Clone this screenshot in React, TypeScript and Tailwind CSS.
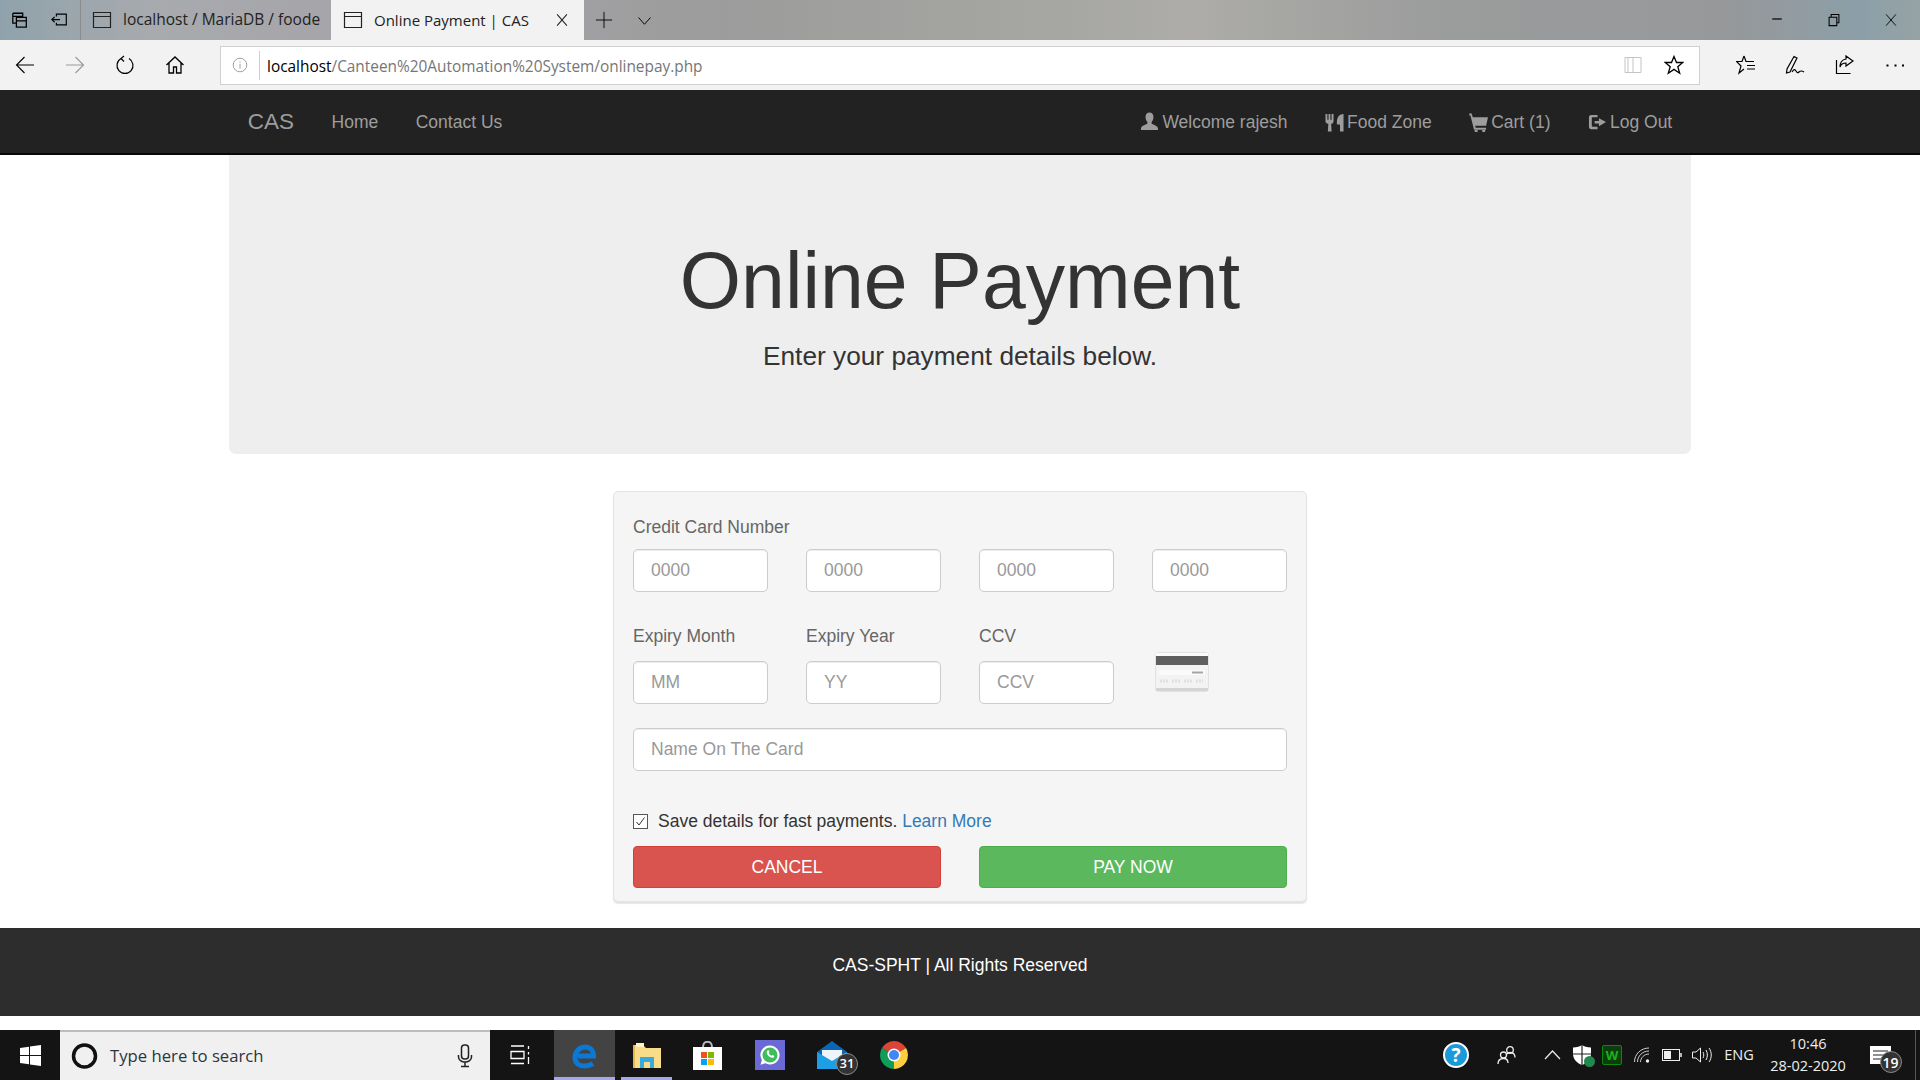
import type { ReactNode } from "react"

const thin = { fill: "none", stroke: "currentColor", strokeWidth: 1 }

function Svg({ size = 20, box = 20, className, children }: { size?: number; box?: number; className?: string; children: ReactNode }) {
  return (
    <svg width={size} height={size} viewBox={`0 0 ${box} ${box}`} className={className}>
      {children}
    </svg>
  )
}

function TabPageIcon() {
  return (
    <Svg size={20}>
      <path d="M1.500 2.500h17v15h-17zM1.500 6.500h17" {...thin} strokeWidth={1.2} />
    </Svg>
  )
}

function UserGlyph() {
  return (
    <Svg size={19} className="mr-[3px] -mt-[1px]">
      <path fill="currentColor" d="M10 .5c2.600 0 4.200 2 4.200 4.800 0 2.300-1 4.100-2 5.200v1.600c0 .8 6.800 2 6.800 5.400v1.500H1v-1.500c0-3.400 6.800-4.600 6.800-5.400v-1.600c-1-1.100-2-2.900-2-5.200C5.800 2.500 7.400.5 10 .5z" />
    </Svg>
  )
}

function FoodGlyph() {
  return (
    <Svg size={19} className="mr-[3px]">
      <path fill="currentColor" d="M.5 1h2v6h1.200V1h2v6h1.200V1h2.100v8c0 1.300-1 2.200-2.500 2.500l.5 8H3l.5-8C1.800 11.200.5 10.300.5 9zM12.500 10C12.500 5 14.500 1 19.500 1v18.500h-3.700V12h-3.300z" />
    </Svg>
  )
}

function CartGlyph() {
  return (
    <Svg size={19} className="mr-[3px]">
      <path fill="currentColor" d="M0 .5h2.800L4 4.500h16l-2 9H6.500l.5 2h11v2H5.300L1.500 2.500H.5zM6 18h3v2H6zM14 18h3v2h-3z" />
    </Svg>
  )
}

function LogOutGlyph() {
  return (
    <Svg size={19} className="mr-[3px]">
      <path fill="currentColor" d="M3.500 2H10v2.500H5c-.8 0-1 .4-1 1v8c0 .7.300 1 1 1h5V17H3.500C1.800 17 1 16 1 14.500v-10C1 3 1.800 2 3.500 2zM11.500 5.500l7.500 4-7.500 4.500v-3H7V8.500h4.500z" />
    </Svg>
  )
}

function NavLink({ icon, children }: { icon?: ReactNode; children: ReactNode }) {
  return (
    <a className="flex items-center px-[18.75px] pt-[1px] text-[#9d9d9d]">
      {icon}
      {children}
    </a>
  )
}

function TabStrip() {
  return (
    <div className="flex h-[40px] items-center text-black bg-[linear-gradient(90deg,#8fa2ab_0%,#a8aaae_8%,#a5a3a8_20%,#9c9c9c_38%,#a6a6a2_55%,#adaca8_62%,#9b9c9c_75%,#96989a_90%,#8c9fa8_97%,#96a3a6_100%)]">
      <div className="flex w-[40px] justify-center">
        <Svg size={18}>
          <path d="M2 2.500h11v4M2 2.500v11h4M2 6h11M6 7h11v11H6zM6 11h11" {...thin} strokeWidth={1.4} />
        </Svg>
      </div>
      <div className="flex h-full w-[41px] items-center justify-center border-r border-[#8c8c8c]">
        <Svg size={18}>
          <path d="M6 6V3.500h11v12H6V13M1 9.500h9M4 6.500l-3 3 3 3" {...thin} strokeWidth={1.3} />
        </Svg>
      </div>
      <div className="flex h-full w-[250px] items-center gap-[11px] pl-[11px] text-[15.500px] text-[#222]">
        <TabPageIcon />
        <span className="whitespace-nowrap">localhost / MariaDB / foode</span>
      </div>
      <div className="flex h-full w-[253px] items-center bg-[#f2f2f2] pl-[12px] text-[15px] text-[#222]">
        <TabPageIcon />
        <span className="ml-[11px] whitespace-nowrap">Online Payment | CAS</span>
        <Svg size={14} className="ml-[26px]">
          <path d="M3 2l14 16M17 2L3 18" {...thin} strokeWidth={1.500} />
        </Svg>
      </div>
      <div className="flex w-[40px] justify-center">
        <Svg size={18}>
          <path d="M10 1v18M1 10h18" {...thin} />
        </Svg>
      </div>
      <div className="flex w-[40px] justify-center">
        <Svg size={15}>
          <path d="M2 6l8 9 8-9" {...thin} strokeWidth={1.300} />
        </Svg>
      </div>
      <div className="ml-auto flex pr-[1px]">
        <div className="flex w-[57px] justify-center">
          <Svg size={12}>
            <path d="M2 10h16" {...thin} strokeWidth={2} />
          </Svg>
        </div>
        <div className="flex w-[57px] justify-center">
          <Svg size={14}>
            <path d="M3 6h11v12H3zM6 6V2h11v12h-3" {...thin} strokeWidth={1.500} />
          </Svg>
        </div>
        <div className="flex w-[57px] justify-center">
          <Svg size={14}>
            <path d="M3 2l14 16M17 2L3 18" {...thin} strokeWidth={1.300} />
          </Svg>
        </div>
      </div>
    </div>
  )
}

function ToolButton({ children }: { children: ReactNode }) {
  return <div className="flex w-[50px] justify-center text-black">{children}</div>
}

function AddressBar() {
  return (
    <div className="flex h-[50px] items-center bg-[#f2f2f2]">
      <ToolButton>
        <Svg size={20}>
          <path d="M19 10H1.500M9.500 2l-8 8 8 8" {...thin} strokeWidth={1.100} />
        </Svg>
      </ToolButton>
      <ToolButton>
        <Svg size={20} className="text-[#9a9a9a]">
          <path d="M1 10h17.500M10.500 2l8 8-8 8" {...thin} strokeWidth={1.100} />
        </Svg>
      </ToolButton>
      <ToolButton>
        <Svg size={20}>
          <path d="M6 3.500A8 8 0 1 0 14 3.500M9 1l-3 2.500L9 6.500" {...thin} strokeWidth={1.200} />
        </Svg>
      </ToolButton>
      <ToolButton>
        <Svg size={20}>
          <path d="M1.500 10L10 2l8.500 8M4 8v10h4.500v-6h3v6H16V8" {...thin} strokeWidth={1.300} />
        </Svg>
      </ToolButton>
      <div className="ml-[20px] flex h-[39px] flex-1 items-center border border-[#d0d0d0] bg-white">
        <div className="flex w-[38px] justify-center text-[#8a8a8a]">
          <Svg size={16}>
            <circle cx="10" cy="10" r="8.500" {...thin} />
            <path d="M10 8.500v6M10 5.500v1.500" {...thin} />
          </Svg>
        </div>
        <div className="h-[29px] w-px bg-[#cfcfcf]" />
        <div className="ml-[7px] mt-[3px] whitespace-nowrap text-[15.400px] text-[#767676]">
          <span className="text-black">localhost</span>/Canteen%20Automation%20System/onlinepay.php
        </div>
        <div className="ml-auto flex items-center pr-[15px]">
          <Svg size={20} className="text-[#c4c4c4]">
            <path d="M2 2.500h16v15H2zM10 2.500v15M5 2.500v15" {...thin} />
          </Svg>
          <Svg size={20} className="ml-[21px] text-black">
            <path d="M10 1.500l2.500 6h6.300l-5 4.200 1.900 6.500-5.700-3.800-5.700 3.800 1.900-6.500-5-4.200h6.300z" {...thin} strokeWidth={1.300} />
          </Svg>
        </div>
      </div>
      <div className="ml-[22px] flex">
        <div className="flex w-[48px] justify-center text-black">
          <Svg size={20}>
            <path d="M8 1l2 5.500h8M8 1L6 6.500H.5L5 11l-2 7 5-4M11 10.500h8M11 14h8" {...thin} strokeWidth={1.200} />
          </Svg>
        </div>
        <ToolButton>
          <Svg size={20}>
            <path d="M9 1.500L12 3 5 17l-3.500 1L2 14zM7 17c2-3 3-3 4-1s2 2 3 1 2-2 5 0" {...thin} strokeWidth={1.200} />
          </Svg>
        </ToolButton>
        <ToolButton>
          <Svg size={20}>
            <path d="M1.500 5v13.500h14M11 1l7 5-7 5V8c-3 0-5 1-6 4 0-5 3-7.500 6-8z" {...thin} strokeWidth={1.200} />
          </Svg>
        </ToolButton>
        <ToolButton>
          <Svg size={20}>
            <path fill="currentColor" d="M1.500 9.500h2v2h-2zM9.500 9.500h2v2h-2zM17 9.500h2v2h-2z" />
          </Svg>
        </ToolButton>
      </div>
    </div>
  )
}

function Navbar() {
  return (
    <nav className="h-[65px] border-b-2 border-[#080808] bg-[#222222] font-['Liberation_Sans',Arial,sans-serif]">
      <div className="mx-auto flex h-full w-[1462px] items-stretch text-[17.500px]">
        <a className="flex items-center px-[18.750px] text-[22.500px] text-[#9d9d9d]">CAS</a>
        <NavLink>Home</NavLink>
        <NavLink>Contact Us</NavLink>
        <div className="ml-auto flex">
          <NavLink icon={<UserGlyph />}>Welcome rajesh</NavLink>
          <NavLink icon={<FoodGlyph />}>Food Zone</NavLink>
          <NavLink icon={<CartGlyph />}>Cart (1)</NavLink>
          <NavLink icon={<LogOutGlyph />}>Log Out</NavLink>
        </div>
      </div>
    </nav>
  )
}

function TextField({ placeholder, className }: { placeholder: string; className: string }) {
  return (
    <input
      placeholder={placeholder}
      className={`block w-full rounded-[5px] border border-[#cccccc] bg-white px-[17px] text-[17.500px] text-[#555] shadow-[inset_0_1px_1px_rgba(0,0,0,0.075)] outline-none placeholder:text-[#999999] ${className}`}
    />
  )
}

function CardIcon() {
  return (
    <svg width="54" height="40" viewBox="0 0 54 40">
      <rect x="0.500" y="0.500" width="53" height="39" rx="3" fill="#f3f3f3" stroke="#e2e2e2" />
      <rect x="1" y="36" width="52" height="3" fill="#d4d4d4" />
      <rect x="1" y="1" width="52" height="3" fill="#fbfbfb" />
      <rect x="1" y="4" width="52" height="9" fill="#5f5f5f" />
      <rect x="4" y="18" width="46" height="5" fill="#fafafa" />
      <rect x="37" y="19.500" width="11" height="2" fill="#a5a5a5" />
      <path d="M5 29h8M17 29h8M29 29h8M41 29h7" stroke="#e0e0e0" strokeWidth="3" strokeDasharray="2 1" />
    </svg>
  )
}

function PaymentPanel() {
  return (
    <div className="mx-auto mt-[37px] w-[694px] rounded-[5px] border border-[#e3e3e3] bg-[#f5f5f5] px-[19px] pb-[13px] pt-[23px] shadow-[0_2px_1px_rgba(0,0,0,0.1)]">
      <label className="block h-[25px] leading-[25px] text-[#666666]">Credit Card Number</label>
      <div className="mt-[9px] grid grid-cols-4 gap-x-[38px]">
        <TextField placeholder="0000" className="h-[43px]" />
        <TextField placeholder="0000" className="h-[43px]" />
        <TextField placeholder="0000" className="h-[43px]" />
        <TextField placeholder="0000" className="h-[43px]" />
      </div>
      <div className="mt-[32px] grid grid-cols-4 gap-x-[38px]">
        <div>
          <label className="mb-[12px] block h-[25px] leading-[25px] text-[#666666]">Expiry Month</label>
          <TextField placeholder="MM" className="h-[43px]" />
        </div>
        <div>
          <label className="mb-[12px] block h-[25px] leading-[25px] text-[#666666]">Expiry Year</label>
          <TextField placeholder="YY" className="h-[43px]" />
        </div>
        <div>
          <label className="mb-[12px] block h-[25px] leading-[25px] text-[#666666]">CCV</label>
          <TextField placeholder="CCV" className="h-[43px]" />
        </div>
        <div className="pl-[3px] pt-[28px]">
          <CardIcon />
        </div>
      </div>
      <TextField placeholder="Name On The Card" className="mt-[24px] h-[43px]" />
      <div className="mt-[37px] flex h-[26px] items-center">
        <div className="flex h-[15px] w-[15px] items-center justify-center border border-[#555] bg-white">
          <svg width="11" height="11" viewBox="0 0 11 11">
            <path d="M1.500 6l2.500 3L9.500 1.500" fill="none" stroke="#333" strokeWidth="1" />
          </svg>
        </div>
        <span className="ml-[10px] text-[#333333]">
          Save details for fast payments. <a className="text-[#337ab7]">Learn More</a>
        </span>
      </div>
      <div className="mt-[12px] grid grid-cols-2 gap-x-[38px]">
        <button className="h-[42px] rounded-[4px] border border-[#d43f3a] bg-[#d9534f] text-white">CANCEL</button>
        <button className="h-[42px] rounded-[4px] border border-[#4cae4c] bg-[#5cb85c] text-white">PAY NOW</button>
      </div>
    </div>
  )
}

function TaskIcon({ width, active, underline, children }: { width: string; active?: boolean; underline?: boolean; children: ReactNode }) {
  return (
    <div className={`relative flex h-full items-center justify-center ${width} ${active ? "bg-[#434343]" : ""}`}>
      {children}
      {underline && <div className="absolute bottom-0 left-[0px] right-[0px] h-[3px] bg-[#a6a6e8]" />}
    </div>
  )
}

function Taskbar() {
  return (
    <div className="flex h-[50px] items-center bg-[#141414] text-white">
      <div className="flex h-full w-[60px] items-center justify-center">
        <svg width="21" height="21" viewBox="0 0 21 21">
          <path fill="#fff" d="M0 3l9-1.300V10H0zM10 1.500L21 0v10H10zM0 11h9v8.300L0 18zM10 11h11v10l-11-1.500z" />
        </svg>
      </div>
      <div className="flex h-full w-[430px] items-center border-t-2 border-[#bdbdbd] bg-[#f0f0f0] pl-[11px]">
        <svg width="28" height="28" viewBox="0 0 28 28">
          <circle cx="13.500" cy="14" r="11" fill="none" stroke="#111" strokeWidth="3.500" />
        </svg>
        <span className="ml-[11px] text-[16.700px] text-[#2c3540]">Type here to search</span>
        <svg className="ml-auto mr-[16px]" width="18" height="24" viewBox="0 0 18 24">
          <rect x="5.500" y="1" width="7" height="14" rx="3" fill="none" stroke="#222" strokeWidth="1.500" />
          <path d="M2.500 11v2c0 3 3 5 6.500 5s6.500-2 6.500-5v-2M9 18v4M5 22.500h8" fill="none" stroke="#222" strokeWidth="1.500" />
        </svg>
      </div>
      <div className="flex h-full w-[64px] items-center justify-center pr-[4px]">
        <svg width="20" height="20" viewBox="0 0 20 20">
          <path d="M1 1h13M1 18.500h13M1 6.500h13v7H1zM18.500 1v3M18.500 7v2.500M18.500 12v7" fill="none" stroke="#fff" strokeWidth="1.300" />
        </svg>
      </div>
      <TaskIcon width="w-[61px]" active underline>
        <svg width="25" height="27" viewBox="0 0 25 27">
          <path d="M6 14h15.500c0-5-2.800-9-8-9-6 0-10.500 4.500-10.500 10.500 0 5.500 4 8.500 9.500 8.500 3 0 6-.8 8.500-2.300" fill="none" stroke="#0a78d7" strokeWidth="5" />
        </svg>
      </TaskIcon>
      <div className="w-[6px]" />
      <TaskIcon width="w-[51px]" underline>
        <svg width="28" height="25" viewBox="0 0 28 25">
          <path fill="#f8dc8a" d="M0 2h10l3 3h15v20H0z" />
          <path fill="#e6b84f" d="M0 2h2v23H0z" />
          <path fill="#fff3c4" d="M3 0h8v4H3z" />
          <path fill="#39a9e0" d="M7 14h14v11h-4v-6h-6v6H7z" />
        </svg>
      </TaskIcon>
      <TaskIcon width="w-[71px]">
        <svg width="29" height="29" viewBox="0 0 29 29">
          <path d="M10 6c0-7 9-7 9 0v4" fill="none" stroke="#bbb" strokeWidth="2" />
          <path fill="#fff" d="M0 6h29v23H0z" />
          <path fill="#f25022" d="M8 11h6v6H8z" />
          <path fill="#7fba00" d="M15 11h6v6h-6z" />
          <path fill="#00a4ef" d="M8 18h6v6H8z" />
          <path fill="#ffb900" d="M15 18h6v6h-6z" />
        </svg>
      </TaskIcon>
      <TaskIcon width="w-[54px]">
        <svg width="30" height="30" viewBox="0 0 30 30">
          <rect width="30" height="30" fill="#6b69d6" />
          <path fill="#fff" d="M15 5.500a9.500 9.500 0 1 1-4.600 17.800L5.500 24.700l1.400-4.700A9.500 9.500 0 0 1 15 5.500z" />
          <circle cx="15" cy="15" r="7.500" fill="#3fbd5a" />
          <path fill="#fff" d="M12.300 10.800c1-.8 1.600-.5 2 .8.300.8-.6 1.200-.4 1.700.5 1.100 1.400 2 2.500 2.400.6.200.9-.9 1.700-.5 1.300.6 1.500 1.300.6 2.200-2.600 2.200-9-3.800-6.400-6.600z" />
        </svg>
      </TaskIcon>
      <TaskIcon width="w-[78px]">
        <div className="relative mr-[8px]">
          <svg width="30" height="28" viewBox="0 0 30 28">
            <path fill="#0d66b5" d="M15 0l15 11v5H0v-5z" />
            <path fill="#eef6fb" d="M5 9h20v6l-10 6-10-6z" />
            <path fill="#1f9ee8" d="M0 11l15 9 15-9v17H0z" />
          </svg>
          <span className="absolute -bottom-[6px] -right-[11px] flex h-[22px] w-[22px] items-center justify-center rounded-full border border-[#8a8a8a] bg-[#333] text-[13px] font-semibold">31</span>
        </div>
      </TaskIcon>
      <TaskIcon width="w-[38px]">
        <svg width="28" height="28" viewBox="0 0 28 28">
          <path fill="#db4437" d="M14 14L1.900 7A14 14 0 0 1 26.100 7z" />
          <path fill="#ffcd40" d="M14 14L26.100 7A14 14 0 0 1 14 28z" />
          <path fill="#0f9d58" d="M14 14V28A14 14 0 0 1 1.900 7z" />
          <circle cx="14" cy="14" r="6.500" fill="#fff" />
          <circle cx="14" cy="14" r="5" fill="#4285f4" />
        </svg>
      </TaskIcon>
      <div className="ml-auto flex h-full items-center text-[#eeeeee]">
        <TaskIcon width="w-[40px]">
          <div className="flex h-[26px] w-[26px] items-center justify-center rounded-full border-2 border-white bg-[#1a9ad9] text-[19px] font-bold text-white">?</div>
        </TaskIcon>
        <TaskIcon width="w-[62px]">
          <svg width="20" height="20" viewBox="0 0 20 20">
            <circle cx="13" cy="5" r="3.300" fill="none" stroke="#eee" strokeWidth="1.300" />
            <circle cx="6.500" cy="10" r="3" fill="none" stroke="#eee" strokeWidth="1.300" />
            <path d="M1 19c0-3.500 2-5.500 5.500-5.500S11 15 11 18M10 9c1-1 2-1.500 3-1.500 3 0 5 2 5 5" fill="none" stroke="#eee" strokeWidth="1.300" />
          </svg>
        </TaskIcon>
        <TaskIcon width="w-[29px]">
          <svg width="17" height="10" viewBox="0 0 17 10">
            <path d="M1 9l7.500-8L16 9" fill="none" stroke="#eee" strokeWidth="1.200" />
          </svg>
        </TaskIcon>
        <TaskIcon width="w-[30px]">
          <div className="relative">
            <svg width="18" height="20" viewBox="0 0 18 20">
              <path fill="#fff" d="M9 0c2 1.500 5 2.500 9 2.500V9c0 5-4 9-9 11-5-2-9-6-9-11V2.500c4 0 7-1 9-2.500z" />
              <path d="M9 0v20M0 9h18" stroke="#222" strokeWidth="1.200" />
            </svg>
            <span className="absolute -bottom-[2px] -right-[4px] h-[11px] w-[11px] rounded-full bg-[#1f8a4c]" />
          </div>
        </TaskIcon>
        <TaskIcon width="w-[30px]">
          <div className="flex h-[20px] w-[20px] items-center justify-center rounded-[2px] border border-[#0a8a0a] bg-[#0c3d0c] text-[13px] font-bold leading-none text-[#18b418]">W</div>
        </TaskIcon>
        <TaskIcon width="w-[30px]">
          <svg width="16" height="16" viewBox="0 0 16 16">
            <path d="M.5 15C.5 7 7 1 15 1M3.500 15c0-6 5-11 11.500-11M6.500 15c0-4 3.500-8 8.500-8" fill="none" stroke="#cfcfcf" strokeWidth="1" />
            <circle cx="13.500" cy="14" r="1.700" fill="#eee" />
          </svg>
        </TaskIcon>
        <TaskIcon width="w-[30px]">
          <svg width="20" height="12" viewBox="0 0 20 12">
            <rect x="0.500" y="0.500" width="17" height="11" fill="none" stroke="#eee" />
            <rect x="2" y="2" width="7" height="8" fill="#eee" />
            <path d="M19 4v4" stroke="#eee" strokeWidth="1.500" />
          </svg>
        </TaskIcon>
        <TaskIcon width="w-[30px]">
          <svg width="21" height="16" viewBox="0 0 21 16">
            <path d="M.5 5H4l4.500-4v14L4 11H.5zM11 5c1 1.500 1 4.500 0 6M14 3c1.800 3 1.800 7 0 10M17 1c3 4 3 10 0 14" fill="none" stroke="#eee" strokeWidth="1" />
          </svg>
        </TaskIcon>
        <div className="flex w-[44px] justify-center text-[14.500px]">ENG</div>
        <div className="flex w-[94px] flex-col items-center text-[14.500px] leading-[22px]">
          <span>10:46</span>
          <span>28-02-2020</span>
        </div>
        <TaskIcon width="w-[50px]">
          <div className="relative">
            <svg width="21" height="18" viewBox="0 0 21 18">
              <path fill="#fff" d="M0 0h21v18H0z" />
              <path d="M3 5h15M3 9h15M3 13h10" stroke="#222" strokeWidth="1.200" />
            </svg>
            <span className="absolute -bottom-[9px] -right-[11px] flex h-[22px] w-[22px] items-center justify-center rounded-full border border-[#8a8a8a] bg-[#333] text-[14px] font-semibold text-white">19</span>
          </div>
        </TaskIcon>
        <div className="h-full w-[15px] pl-[10px]">
          <div className="h-full w-px bg-[#555]" />
        </div>
      </div>
    </div>
  )
}

export default function App() {
  return (
    <div className="flex h-[1080px] flex-col overflow-hidden bg-white font-['Open_Sans',sans-serif]">
      <TabStrip />
      <AddressBar />
      <Navbar />
      <main className="flex-1 font-['Liberation_Sans',Arial,sans-serif] text-[17.500px]">
        <div className="mx-auto flex h-[299px] w-[1462px] flex-col items-center rounded-b-[7px] bg-[#eeeeee] pt-[83px]">
          <h1 className="text-[78.750px] leading-[86px] text-[#333333]">Online Payment</h1>
          <p className="mt-[14px] text-[26.250px] leading-[37px] text-[#333333]">Enter your payment details below.</p>
        </div>
        <PaymentPanel />
      </main>
      <footer className="flex h-[88px] justify-center bg-[#2d2d2d] pt-[25px] font-['Liberation_Sans',Arial,sans-serif] text-[17.500px] leading-[25px] text-white">
        CAS-SPHT | All Rights Reserved
      </footer>
      <div className="h-[14px] bg-white" />
      <Taskbar />
    </div>
  )
}
